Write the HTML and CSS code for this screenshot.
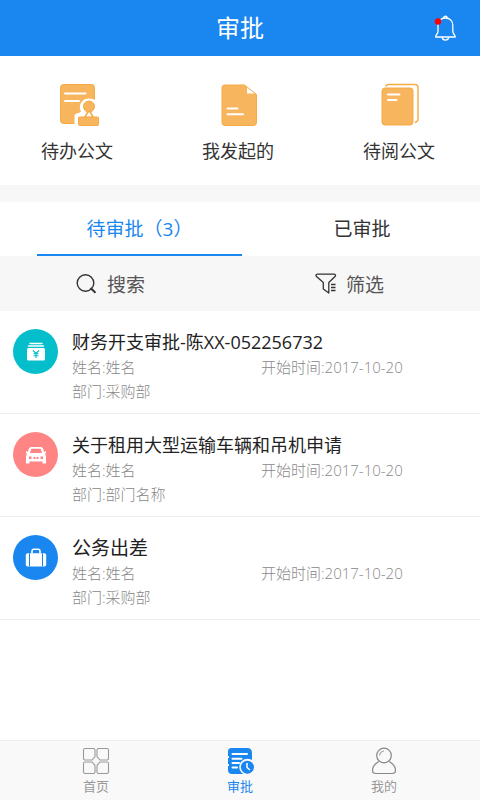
FILE: index.html
```html
<!DOCTYPE html>
<html lang="zh-CN">
<head>
<meta charset="utf-8">
<meta name="viewport" content="width=device-width, initial-scale=1">
<title>审批</title>
<link rel="stylesheet" href="styles.css">
</head>
<body>
<header class="topbar">
  <h1 class="topbar-title">审批</h1>
  <button class="bell" type="button" aria-label="通知">
    <svg width="24" height="28" viewBox="0 0 24 28" fill="none" stroke="#fff" stroke-width="1.3" stroke-linejoin="round">
      <path d="M10.6 4.2C10.6 1.6 14.2 1.6 14.2 4.2"/>
      <path d="M12.4 4C7.6 4 5 7.300 5 11.500V17.500C5 19.800 2.600 20.700 2.600 23H22.200C22.200 20.700 19.800 19.800 19.800 17.500V11.500C19.800 7.300 17.200 4 12.400 4Z"/>
      <path d="M9 23.200C9.600 27.200 15.200 27.200 15.800 23.200"/>
      <circle cx="5" cy="7.500" r="3.200" fill="#f00" stroke="none"/>
    </svg>
  </button>
</header>

<main class="content">
  <nav class="shortcuts" aria-label="公文">
    <a class="shortcut" href="#todo">
      <svg width="44" height="44" viewBox="0 0 44 44">
        <rect x="5.500" y="1.500" width="34" height="39" rx="3" fill="#f7b55e" stroke="#f5aa44"/>
        <path d="M10 10.500H30.500M10 18H24" stroke="#fff" stroke-width="2" stroke-linecap="round"/>
        <path d="M41 17.500C37 14.500 29.500 14.500 26.500 19C24 23 24.800 26 26 28.500C24 31 19.500 29.500 19.500 33V42H41Z" fill="#fff"/>
        <circle cx="34" cy="23.500" r="5.500" fill="#f7b55e" stroke="#f5aa44"/>
        <path d="M33.500 28L29.500 34.500H38.500L34.500 28" fill="none" stroke="#f5aa44" stroke-width="1.500"/>
        <rect x="23.500" y="34" width="20" height="8.500" rx="1" fill="#f7b55e" stroke="#f5aa44"/>
      </svg>
      <span>待办公文</span>
    </a>
    <a class="shortcut" href="#mine">
      <svg width="44" height="44" viewBox="0 0 44 44">
        <path d="M8.500 2H28.500L40.500 11.500V39.500Q40.500 42.500 37.500 42.500H9Q6 42.500 6 39.500V5Q6 2 8.500 2Z" fill="#f7b55e" stroke="#f5aa44"/>
        <path d="M31 4.500V10.500H38.500Z" fill="#fff"/>
        <path d="M11.500 25.500H21.500M11.500 31.300H27" stroke="#fff" stroke-width="2" stroke-linecap="round"/>
      </svg>
      <span>我发起的</span>
    </a>
    <a class="shortcut" href="#toread">
      <svg width="44" height="44" viewBox="0 0 44 44">
        <path d="M8.500 3.500Q9.500 1.500 11.500 1.500H38Q41 1.500 41 4.500V36Q41 38.500 38 39.500" fill="none" stroke="#f5aa44" stroke-width="1.400"/>
        <rect x="5" y="5" width="31" height="37" rx="3" fill="#f7b55e" stroke="#f5aa44"/>
        <path d="M11 11.500H22.500M11 17H19.500" stroke="#fff" stroke-width="2" stroke-linecap="round"/>
      </svg>
      <span>待阅公文</span>
    </a>
  </nav>

  <section class="approvals">
    <div class="tabs" role="tablist">
      <button class="tab tab-active" type="button" role="tab" aria-selected="true">待审批（3）</button>
      <button class="tab" type="button" role="tab" aria-selected="false">已审批</button>
    </div>

    <div class="tools">
      <button class="tool" type="button">
        <svg width="22" height="22" viewBox="0 0 22 22" fill="none" stroke="#333">
          <circle cx="9.500" cy="10" r="8.300" stroke-width="1.400"/>
          <path d="M14.500 15L19.500 19.800" stroke-width="2"/>
        </svg>
        <span>搜索</span>
      </button>
      <button class="tool" type="button">
        <svg width="22" height="22" viewBox="0 0 22 22" fill="none" stroke="#333" stroke-width="1.300" stroke-linejoin="round">
          <path d="M2.500 1.200H19Q21.500 1.500 20 3.500L13.800 9.500V20L8.300 16V9.500L1.500 3.500Q0 1.500 2.500 1.200Z"/>
          <path d="M16 11.500H20.500M16 14.500H20.500M16 17.500H20.500"/>
        </svg>
        <span>筛选</span>
      </button>
    </div>

    <ul class="list">
      <li class="item">
        <span class="badge badge-teal">
          <svg width="24" height="24" viewBox="0 0 24 24">
            <path d="M6 3.500H18M4.500 6H19.500" stroke="#fff" stroke-width="1.400" stroke-linecap="round"/>
            <rect x="3" y="8" width="18" height="12.500" rx="1.500" fill="#fff"/>
            <path d="M9 10.500L12 13.500L15 10.500M12 13.500V18M9.500 13.700H14.500M9.500 15.800H14.500" fill="none" stroke="#04bfcb" stroke-width="1.100"/>
          </svg>
        </span>
        <div class="item-body">
          <h2 class="item-title">财务开支审批-陈XX-052256732</h2>
          <div class="meta"><span>姓名:姓名</span><span>开始时间:2017-10-20</span></div>
          <div class="meta"><span>部门:采购部</span></div>
        </div>
      </li>
      <li class="item">
        <span class="badge badge-pink">
          <svg width="24" height="24" viewBox="0 0 24 24">
            <path fill="#fff" fill-rule="evenodd" d="M7 4H17Q18.500 4 19 5.500L20.200 9L22 8V10L21 11Q22 12 22 13.500V20.500H18.500V18.500H5.500V20.500H2V13.500Q2 12 3 11L2 10V8L3.800 9L5 5.500Q5.500 4 7 4ZM7.300 5.800L6 10H18L16.700 5.800ZM5 13.500V16H7.500V13.500ZM9.500 14V16H11.500V14ZM12.500 14V16H14.500V14ZM16.500 13.500V16H19V13.500Z"/>
          </svg>
        </span>
        <div class="item-body">
          <h2 class="item-title">关于租用大型运输车辆和吊机申请</h2>
          <div class="meta"><span>姓名:姓名</span><span>开始时间:2017-10-20</span></div>
          <div class="meta"><span>部门:部门名称</span></div>
        </div>
      </li>
      <li class="item">
        <span class="badge badge-blue">
          <svg width="24" height="24" viewBox="0 0 24 24">
            <path d="M8 7.500V5Q8 3.300 9.500 3.300H14.500Q16 3.300 16 5V7.500" fill="none" stroke="#fff" stroke-width="1.600"/>
            <rect x="1.800" y="7.300" width="20.400" height="13.200" rx="2" fill="#fff"/>
            <path d="M5.500 7.300V20.500M18.500 7.300V20.500" stroke="#1a86f0" stroke-width="1"/>
          </svg>
        </span>
        <div class="item-body">
          <h2 class="item-title item-title-short">公务出差</h2>
          <div class="meta"><span>姓名:姓名</span><span>开始时间:2017-10-20</span></div>
          <div class="meta"><span>部门:采购部</span></div>
        </div>
      </li>
    </ul>
  </section>
</main>

<nav class="bottombar" aria-label="主导航">
  <a class="dest" href="#home">
    <svg width="28" height="28" viewBox="0 0 28 28" fill="none" stroke="#999" stroke-width="1.100">
      <path d="M3 1.500H11.500Q13 1.500 13 3V9.500L10 13H3Q1.500 13 1.500 11.500V3Q1.500 1.500 3 1.500Z"/>
      <path d="M25 1.500H16.500Q15 1.500 15 3V9.500L18 13H25Q26.500 13 26.500 11.500V3Q26.500 1.500 25 1.500Z"/>
      <path d="M3 26.500H11.500Q13 26.500 13 25V18.500L10 15H3Q1.500 15 1.500 16.500V25Q1.500 26.500 3 26.500Z"/>
      <path d="M25 26.500H16.500Q15 26.500 15 25V18.500L18 15H25Q26.500 15 26.500 16.500V25Q26.500 26.500 25 26.500Z"/>
    </svg>
    <span>首页</span>
  </a>
  <a class="dest dest-active" href="#approval" aria-current="page">
    <svg width="28" height="28" viewBox="0 0 28 28">
      <path d="M5.500 1H21Q26 1 26 6V27H6Q2 27 2 23V19H3V17H2V11H3V9H2V4.500Q2 1 5.500 1Z" fill="#1a86f0"/>
      <path d="M6.500 7H21M6.500 11.800H15.500M6.500 16H13M6.500 20.500H11" stroke="#fff" stroke-width="2" stroke-linecap="round"/>
      <circle cx="21.500" cy="20" r="8.300" fill="#f9f9f9"/>
      <circle cx="21.400" cy="20.200" r="6.500" fill="#1a86f0"/>
      <path d="M21 16V20.500L24 23" fill="none" stroke="#fff" stroke-width="1.500"/>
    </svg>
    <span>审批</span>
  </a>
  <a class="dest" href="#me">
    <svg width="28" height="28" viewBox="0 0 28 28" fill="none" stroke="#888" stroke-width="1.200">
      <circle cx="14" cy="8.500" r="7.300"/>
      <path d="M9.500 8.500Q10 4.500 14 4" stroke="#aaa"/>
      <path d="M9.500 14.300C5 16.500 2.500 20 2.500 23.500Q2.500 26.500 6 26.500H22Q25.500 26.500 25.500 23.500C25.500 20 23 16.500 18.500 14.300"/>
    </svg>
    <span>我的</span>
  </a>
</nav>
</body>
</html>
```
FILE: styles.css
```css
* {
  box-sizing: border-box;
}

body {
  margin: 0;
  min-height: 100vh;
  display: flex;
  flex-direction: column;
  background: #fff;
  color: #333;
  font-family: "Open Sans", "Noto Sans CJK SC", sans-serif;
  font-weight: 400;
}

button {
  padding: 0;
  border: 0;
  background: none;
  color: inherit;
  font: inherit;
}

a {
  color: inherit;
  text-decoration: none;
}

svg {
  display: block;
}

.topbar {
  display: grid;
  grid-template-columns: 1fr auto 1fr;
  align-items: center;
  height: 56px;
  padding: 0 23px;
  background: #1a86f0;
  color: #fff;
}

.topbar-title {
  grid-column: 2;
  margin: 0;
  font-size: 24px;
  font-weight: 400;
  line-height: 32px;
}

.bell {
  justify-self: end;
}

.content {
  flex: 1;
}

.shortcuts {
  display: flex;
  justify-content: space-between;
  padding: 27px 45px 22px 41px;
}

.shortcut {
  display: flex;
  flex-direction: column;
  align-items: center;
  gap: 12px;
  font-size: 18px;
  line-height: 24px;
}

.approvals {
  border-top: 17px solid #f7f7f7;
}

.tabs {
  display: flex;
  justify-content: space-between;
  padding: 0 38px 0 37px;
}

.tab {
  width: 160px;
  height: 54px;
  border-bottom: 2px solid transparent;
  font-size: 19px;
}

.tab-active {
  width: 205px;
  border-color: #1a86f0;
  color: #1a86f0;
}

.tools {
  display: grid;
  grid-template-columns: 1fr 1fr;
  height: 55px;
  padding-left: 76px;
  background: #f7f7f7;
  color: #555;
}

.tool {
  display: flex;
  align-items: center;
  gap: 9px;
  font-size: 19px;
}

.tool + .tool {
  padding-left: 37px;
}

.list {
  margin: 0;
  padding: 0;
  list-style: none;
}

.item {
  display: flex;
  gap: 14px;
  padding: 18px 13px 10px;
  border-bottom: 1px solid #eee;
}

.badge {
  display: grid;
  flex: none;
  place-items: center;
  width: 45px;
  height: 45px;
  border-radius: 50%;
}

.badge-teal {
  background: #04bfcb;
}

.badge-pink {
  background: #ff8585;
}

.badge-blue {
  background: #1a86f0;
}

.item-body {
  flex: 1;
}

.item-title {
  margin: 0;
  color: #222;
  font-size: 18px;
  font-weight: 400;
  line-height: 26px;
}

.item-title-short {
  font-size: 19px;
}

.meta {
  display: grid;
  grid-template-columns: 189px 1fr;
  color: #888;
  font-size: 15px;
  font-weight: 300;
  line-height: 24px;
}

.bottombar {
  display: flex;
  justify-content: space-between;
  padding: 6px 82px 5px;
  border-top: 1px solid #eee;
  background: #f9f9f9;
}

.dest {
  display: flex;
  flex-direction: column;
  align-items: center;
  gap: 2px;
  color: #999;
  font-size: 13px;
  line-height: 18px;
}

.dest-active {
  color: #1a86f0;
}
```
